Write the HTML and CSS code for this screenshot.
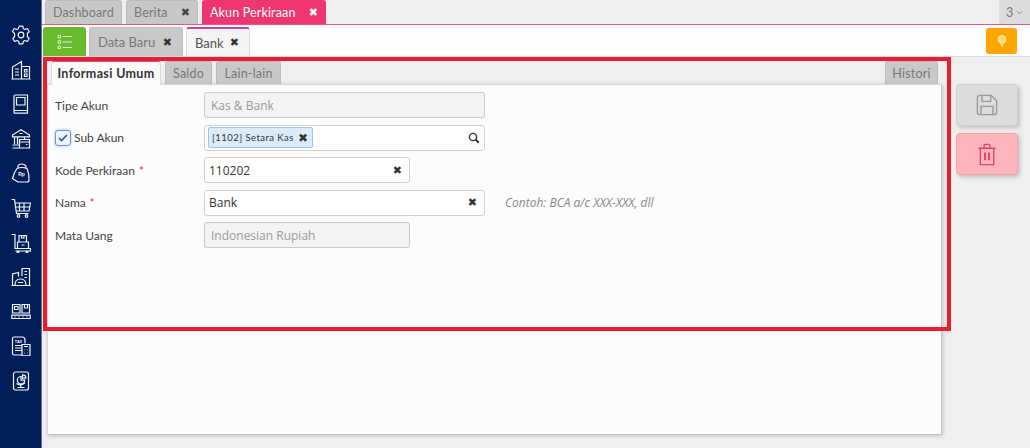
FILE: index.html
```html
<!DOCTYPE html>
<html lang="id">
<head>
<meta charset="utf-8">
<title>Akun Perkiraan</title>
<link rel="stylesheet" href="styles.css">
</head>
<body>
<div class="app">
  <nav class="side">
    <svg class="ico" viewBox="0 0 20 20"><path d="M8.200 1.200h3.600l.6 2.500 1.600.8 2.400-1 1.800 3-1.800 1.900v3.200l1.800 1.900-1.800 3-2.400-1-1.600.8-.6 2.500H8.200l-.6-2.500-1.600-.8-2.400 1-1.800-3 1.800-1.900V8.400L1.400 6.500l1.800-3 2.400 1 1.600-.8z" stroke-linejoin="round"/><circle cx="10" cy="10" r="2.800"/></svg>
    <svg class="ico" viewBox="0 0 20 20"><path d="M.5 19h19M1.500 19V7l9-5.500V19M10.500 6.500h8V19M4 9h4M4 12h4M4 15h4M13.500 9.500h2.500v2.500h-2.500zM13.500 14h2.500v2.500h-2.500z"/></svg>
    <svg class="ico" viewBox="0 0 20 20"><path d="M3 16.500V2.500Q3 1 4.500 1h12v15.500H4.500Q3 16.500 3 18t1.500 1.200h12v-2.700M5.500 3.500h8.500v7.500H5.500zM6.500 19h7" /></svg>
    <svg class="ico" viewBox="0 0 20 20"><path d="M10 .8 1.500 6v1.800h17V6zM8.500 4.500h3M3.500 7.800V15M6.500 7.800V15M13.500 7.800v2.700M1.500 16h7M1.500 19h7M8.500 10.500h10v8.500h-10zM8.500 13h10M15 15.500h1.500"/></svg>
    <svg class="ico" viewBox="0 0 20 20"><path d="M7 5.500V3.500Q7 1 10.500 1T15 3.500v2.500M6 5.500Q11 3.500 16 5.500 18.500 11 18 17q0 2-2 2H7l-5.500-3.500Q3 9.500 6 5.500z" stroke-linejoin="round"/><text class="rp" x="10.500" y="13" text-anchor="middle">Rp</text></svg>
    <svg class="ico" viewBox="0 0 20 20"><path d="M.5 1.500h3L5.500 15.500h12M4 5h15.500l-1.500 8H5.200M8.500 5v8M13 5v8M4.500 9h14.500"/><circle cx="7.500" cy="18" r="1.300"/><circle cx="15.500" cy="18" r="1.300"/></svg>
    <svg class="ico" viewBox="0 0 20 20"><path d="M.5 1.500h3.500V15.500h15.500v2.500H4.500M6.500 9h11v6.500h-11zM8 2.500h7.500V9H8zM10.500 2.500v2.500h2.500V2.500M10.500 12h3"/><circle cx="7" cy="19" r=".9"/><circle cx="16" cy="19" r=".9"/></svg>
    <svg class="ico" viewBox="0 0 20 20"><path d="M.5 18.500h19M1.500 18.500V7l6-1.500v4M11 9V1.500h7.500v17M13.500 4.500h2.500M13.500 7.500h2.500M13.500 10.500h2.500M4 18q0-6 5.500-6t5.500 6M7 15.500h5"/></svg>
    <svg class="ico" viewBox="0 0 20 20"><path d="M1.500 2.500h7.500v8.500H1.500zM11 2.500h7.500v8.500H11zM3.500 4.500h3.500v3H3.500zM13.500 2.500v3.500h3V2.500M.8 13.200h18.400v3.300H.8zM3.500 14.800h1M7.500 14.800h1M11.500 14.800h1M15.500 14.800h1"/></svg>
    <svg class="ico" viewBox="0 0 20 20"><path d="M10.500 19H3q-1.500 0-1.500-1.500V2.500Q1.500 1 3 1h8Q14 1 14 4v3.500M4 9.500h6.500M4 12h6.500M4 14.500h6.500M11 8.500h8V19q0 .8-.8.8H11.800q-.8 0-.8-.8zM13 10.500h4M13.500 14h.6M16.500 14h.6M13.500 17h.6M16.500 17h.6"/><text class="tx" x="7.500" y="6.500" text-anchor="middle">TAX</text></svg>
    <svg class="ico" viewBox="0 0 20 20"><rect x="2.500" y="1" width="15" height="18" rx="2"/><path d="M10 5.500a3.700 3.700 0 1 0 3.700 3.700H10zM11.500 3.800a3.400 3.400 0 0 1 3.400 3.400h-3.400zM5.500 12.500q4 3 8.500-.5M9.800 14.500v1.500M6.500 16.500h7"/></svg>
  </nav>
  <div class="main">
    <div class="toptabs">
      <span class="ttab w-dash">Dashboard</span>
      <span class="ttab w-berita">Berita<b class="x">✖</b></span>
      <span class="ttab on">Akun Perkiraan<b class="x">✖</b></span>
      <span class="more">3 <svg class="chev" viewBox="0 0 8 5"><path d="M1 1l3 3 3-3"/></svg></span>
    </div>
    <div class="subbar">
      <span class="listbtn"><svg viewBox="0 0 16 14"><path d="M5.500 1.500H15M5.500 7H15M5.500 12.500H15"/><path d="M1 .5h2.500V3H1zM1 5.800h2.500v2.500H1zM1 11.200h2.500v2.500H1z"/></svg></span>
      <span class="stab">Data Baru<b class="x">✖</b></span>
      <span class="stab cur">Bank<b class="x">✖</b></span>
      <span class="tip"><svg viewBox="0 0 10 12"><path d="M3 7.800Q1 6.500 1 4.500a4 4 0 0 1 8 0q0 2-2 3.300z"/><path class="bulb-base" d="M3.300 9.300h3.400M4 11h2"/></svg></span>
    </div>
    <div class="content">
      <div class="col">
        <div class="card">
          <div class="ftabs">
            <span class="ftab cur">Informasi Umum</span>
            <span class="ftab w-saldo">Saldo</span>
            <span class="ftab w-lain">Lain-lain</span>
            <span class="ftab hist">Histori</span>
          </div>
          <div class="sheet">
            <div class="form">
              <label class="lab">Tipe Akun</label>
              <div class="inp wide dis">Kas &amp; Bank</div>
              <label class="lab chk"><span class="box"><svg viewBox="0 0 10 8"><path d="M1 4l2.500 2.500L9 1"/></svg></span>Sub Akun</label>
              <div class="inp wide sel"><span class="tag">[1102] Setara Kas<b class="x">✖</b></span><svg class="mag" viewBox="0 0 12 12"><circle cx="5" cy="5" r="3.600"/><path d="M7.800 7.800l3 3" stroke-width="2"/></svg></div>
              <label class="lab">Kode Perkiraan <i class="req">*</i></label>
              <div class="inp short">110202<b class="x">✖</b></div>
              <label class="lab">Nama <i class="req">*</i></label>
              <div class="rowx"><div class="inp wide">Bank<b class="x">✖</b></div><em class="hint">Contoh: BCA a/c XXX-XXX, dll</em></div>
              <label class="lab">Mata Uang</label>
              <div class="inp short dis">Indonesian Rupiah</div>
            </div>
          </div>
        </div>
      </div>
      <div class="acts">
        <span class="act save"><svg viewBox="0 0 24 24"><path d="M4.500 1.500h12l6 6v12q0 3-3 3h-15q-3 0-3-3v-15q0-3 3-3z"/><path d="M6.500 1.500v6.500h9.500V1.500M5.500 22.500v-9h13v9"/></svg></span>
        <span class="act del"><svg viewBox="0 0 20 24"><path d="M1 5.500h18M7 5.500V2.500q0-1 1-1h4q1 0 1 1v3M3 5.500v17h14v-17"/><path d="M8 10v8M12 10v8" stroke-width="2"/></svg></span>
      </div>
    </div>
  </div>
</div>
<div class="mark" aria-hidden="true"></div>
</body>
</html>
```
FILE: styles.css
```css
* { box-sizing: border-box; }
html, body { margin: 0; height: 448px; overflow: hidden; }
body { font-family: "Lato", "Liberation Sans", sans-serif; font-size: 12.500px; color: #444; background: #efefef; position: relative; }
.app { display: flex; width: 1030px; height: 448px; }
.side { width: 42px; flex: none; background: #021e59; border-right: 1px solid #5d7590; display: flex; flex-direction: column; align-items: center; padding-top: 25px; gap: 14.600px; }
.ico { width: 20px; height: 20px; fill: none; stroke: #f2f5f8; stroke-width: 1.200; }
.rp, .tx { fill: #f2f5f8; stroke: none; font-family: "Liberation Sans", sans-serif; font-weight: 700; }
.rp { font-size: 5px; }
.tx { font-size: 3.800px; }
.main { flex: 1; min-width: 0; display: flex; flex-direction: column; }
.toptabs { height: 25px; flex: none; display: flex; padding-left: 3px; gap: 4px; background: #efefef; border-bottom: 1px solid #e2587f; }
.ttab { height: 24px; padding: 0 7px; display: flex; align-items: center; justify-content: space-between; white-space: nowrap; background: #c8c8c8; color: #777; border-radius: 3px 3px 0 0; border: 1px solid #bdbdbd; border-bottom: 0; letter-spacing: .15px; }
.w-dash { width: 77px; }
.w-berita { width: 72px; }
.ttab.on { width: 124px; background: #ef3670; border-color: #ef3670; color: #fff; }
.x { font-weight: 400; font-family: "DejaVu Sans", sans-serif; font-size: 11px; color: #333; line-height: 1; letter-spacing: 0; }
.ttab .x { color: #444; }
.ttab.on .x { color: #fff; }
.more { margin-left: auto; width: 31px; height: 24px; background: #dcdcdc; color: #777; display: flex; align-items: center; justify-content: center; gap: 3px; }
.chev { width: 7px; height: 5px; fill: none; stroke: #777; }
.subbar { height: 32px; display: flex; align-items: flex-end; gap: 3px; padding: 0 13px 0 1px; background: #fdfdfd; border-bottom: 1px solid #ddd; flex: none; }
.listbtn { width: 43px; height: 29px; background: #68bb2c; border-radius: 3px 3px 0 0; display: flex; align-items: center; justify-content: center; }
.listbtn svg { width: 16px; height: 14px; fill: none; stroke: #dff2cf; }
.stab { width: 94px; height: 29px; padding: 0 10px 0 8px; display: flex; align-items: center; justify-content: space-between; white-space: nowrap; background: #c9c9c9; border: 1px solid #bdbdbd; border-bottom: 0; border-radius: 3px 3px 0 0; color: #777; font-size: 13px; }
.stab.cur { width: 64px; background: #f4f4f4; border-color: #ddd; border-top: 2px solid #c2479a; color: #555; }
.tip { margin: 0 0 2px auto; width: 31px; height: 26px; background: #ffa600; border-radius: 3px; display: flex; align-items: center; justify-content: center; }
.tip svg { width: 10px; height: 12px; fill: #ffd67a; stroke: #fff3c4; stroke-width: 1; }
.bulb-base { fill: none; }
.content { flex: 1; display: flex; min-height: 0; background: #efefef; }
.col { width: 900px; flex: none; padding: 4px 0 0 5px; }
.card { height: 374px; display: flex; flex-direction: column; }
.ftabs { height: 23px; display: flex; gap: 4px; padding-left: 4px; flex: none; }
.ftab { height: 23px; display: flex; align-items: center; justify-content: center; background: #c9c9c9; color: #777; border: 1px solid #bdbdbd; border-bottom: 0; border-radius: 3px 3px 0 0; letter-spacing: .2px; }
.ftab.cur { width: 110px; background: #fbfbfb; border-color: #ddd; border-top: 1px solid #d84b8c; color: #333; font-weight: 700; height: 24px; position: relative; z-index: 1; letter-spacing: .35px; }
.w-saldo { width: 47px; }
.w-lain { width: 65px; }
.ftab.hist { width: 53px; margin-left: auto; margin-right: 4px; }
.sheet { flex: 1; background: #fcfcfc; border: 1px solid #d6d6d6; border-right: 1px solid #c4c4c4; border-bottom: 1px solid #c4c4c4; border-radius: 2px; box-shadow: 1px 1px 4px rgba(0,0,0,.18); padding: 7px 0 0 7px; }
.form { display: grid; grid-template-columns: 149px auto; grid-auto-rows: 26px; row-gap: 6.500px; align-items: center; justify-content: start; }
.lab { color: #444; display: flex; align-items: center; gap: 4px; font-size: 12px; }
.req { color: #c8323c; font-style: normal; font-size: 11px; }
.chk { gap: 3px; }
.box { width: 16px; height: 16px; border: 1px solid #6e96bf; border-radius: 3px; background: #eef4fa; box-shadow: 0 0 3px #9cbfe0; display: flex; align-items: center; justify-content: center; }
.box svg { width: 10px; height: 8px; fill: none; stroke: #1f5a97; stroke-width: 1.600; }
.inp { height: 26px; background: #fff; border: 1px solid #d0d0d0; border-radius: 3px; display: flex; align-items: center; justify-content: space-between; padding: 0 7px 0 4px; color: #333; font-family: "Open Sans", sans-serif; font-size: 12px; }
.wide { width: 281px; }
.short { width: 206px; }
.dis { background: #f3f3f3; color: #999; padding-left: 6px; border-color: #c8c8c8; }
.sel { padding: 0 4px 0 3px; }
.tag { height: 21px; width: 105px; display: flex; align-items: center; justify-content: space-between; padding: 0 4px 0 3px; font-size: 9.500px; font-family: "Lato", sans-serif; background: #dcebfa; border: 1px solid #a4c4e2; border-radius: 2px; letter-spacing: .45px; }
.tag .x { font-size: 12px; }
.mag { width: 12px; height: 12px; fill: none; stroke: #333; stroke-width: 1.400; }
.rowx { display: flex; align-items: center; gap: 20px; }
.hint { color: #888; font-family: "Open Sans", sans-serif; font-size: 12px; }
.acts { flex: 1; padding: 27px 0 0 14px; display: flex; flex-direction: column; gap: 7px; }
.act { width: 62px; height: 42px; border-radius: 4px; display: flex; align-items: center; justify-content: center; box-shadow: 2px 2px 4px rgba(0,0,0,.2); }
.save { background: #dcdcdc; border: 1px solid #d0d0d0; }
.save svg { width: 22px; height: 22px; fill: none; stroke: #999; stroke-width: 1.500; }
.del { background: #feb6bc; border: 1px solid #f0a4ac; }
.del svg { width: 20px; height: 23px; fill: none; stroke: #e0406c; stroke-width: 1.400; }
.mark { position: absolute; left: 43px; top: 57px; width: 908px; height: 274px; border: 4px solid #ec1c2e; pointer-events: none; }
```
